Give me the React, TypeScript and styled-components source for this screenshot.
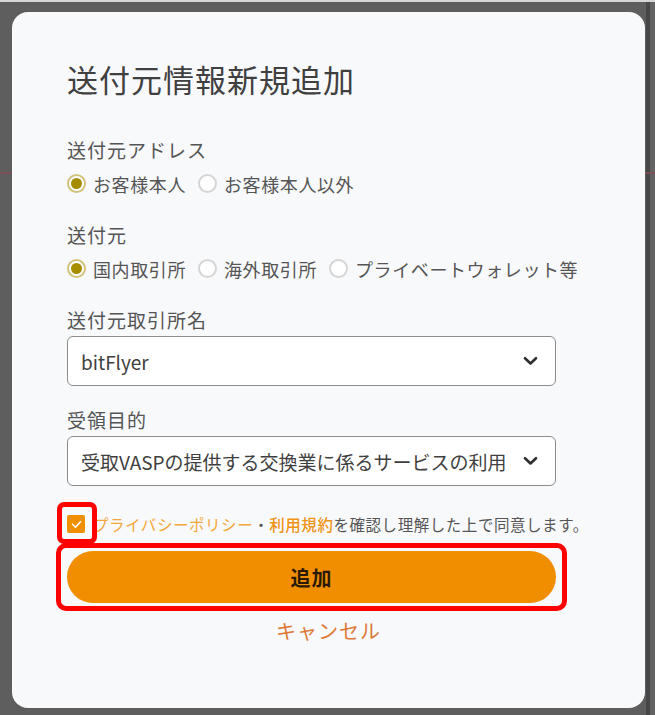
import React, { useState } from 'react';
import styled, { createGlobalStyle } from 'styled-components';

const Global = createGlobalStyle`
  html, body { margin: 0; padding: 0; }
  body {
    font-family: "Noto Sans CJK JP", "Noto Sans", sans-serif;
    background: #5e5e5e;
  }
  *, *::before, *::after { box-sizing: border-box; }
`;

const Backdrop = styled.div`
  width: 655px;
  height: 715px;
  overflow: hidden;
  border-top: 2px solid #d6d6d6;
  padding: 10px 10px 7px 12px;
  background:
    linear-gradient(#7c4f57, #7c4f57) 0 170px / 100% 2px no-repeat,
    linear-gradient(to right, #5e5e5e 0 646px, #474747 646px 650px, #626262 650px);
`;

const Modal = styled.div`
  width: 633px;
  height: 696px;
  border-radius: 16px;
  background: #f8f9fb;
  padding-top: 46px;
  display: flex;
  flex-direction: column;
`;

const Content = styled.div`
  margin-left: 55px;
  width: 489px;
  display: flex;
  flex-direction: column;
`;

const Title = styled.h1`
  margin: 0 0 36px;
  font-size: 31px;
  line-height: 42px;
  font-weight: 400;
  color: #404040;
  letter-spacing: 1px;
  white-space: nowrap;
`;

const Fields = styled.div`
  display: flex;
  flex-direction: column;
  gap: 20px;
`;

const Field = styled.div`
  display: flex;
  flex-direction: column;
  gap: 2px;
`;

const Label = styled.div`
  font-size: 19px;
  line-height: 28px;
  letter-spacing: 1px;
  color: #555;
`;

const RadioRow = styled.div`
  height: 35px;
  display: flex;
  align-items: center;
  gap: 12px;
`;

const RadioOption = styled.label`
  flex: none;
  white-space: nowrap;
  display: flex;
  align-items: center;
  gap: 7px;
  font-size: 18px;
  letter-spacing: 0.6px;
  color: #555;
  cursor: pointer;
`;

const RadioDot = styled.span<{ $checked: boolean }>`
  width: 19px;
  height: 19px;
  border-radius: 50%;
  background: #fff;
  border: 2px solid ${(p) => (p.$checked ? '#d3c27c' : '#d5d5d5')};
  display: flex;
  align-items: center;
  justify-content: center;
  flex: none;
  &::after {
    content: '';
    width: 11px;
    height: 11px;
    border-radius: 50%;
    background: ${(p) => (p.$checked ? '#a58c00' : 'transparent')};
  }
`;

const SelectBox = styled.div`
  height: 50px;
  border: 1.5px solid #8c8c8c;
  border-radius: 6px;
  background: #fff;
  padding: 0 17px 0 13px;
  display: flex;
  align-items: center;
  justify-content: space-between;
  font-size: 19px;
  color: #3f3f3f;
  cursor: pointer;
`;

const Agreement = styled.div`
  margin-top: 26px;
  height: 24px;
  display: flex;
  align-items: center;
  gap: 8px;
`;

const Anchor = styled.span`
  position: relative;
  display: flex;
  flex: none;
`;

const CheckBox = styled.span`
  width: 18px;
  height: 18px;
  border-radius: 2px;
  background: #f09000;
  display: flex;
  align-items: center;
  justify-content: center;
`;

const Highlight = styled.span<{ $t: number; $r: number; $b: number; $l: number; $radius: number }>`
  position: absolute;
  top: ${(p) => p.$t}px;
  right: ${(p) => p.$r}px;
  bottom: ${(p) => p.$b}px;
  left: ${(p) => p.$l}px;
  border: 5px solid #ff0000;
  border-radius: ${(p) => p.$radius}px;
  pointer-events: none;
`;

const AgreeText = styled.span`
  font-size: 15.5px;
  letter-spacing: 0.55px;
  color: #555;
  white-space: nowrap;
`;

const Link = styled.span<{ $strong?: boolean }>`
  color: ${(p) => (p.$strong ? '#ef9314' : '#f4a63a')};
  font-weight: ${(p) => (p.$strong ? 500 : 400)};
`;

const ButtonWrap = styled.div`
  position: relative;
  margin-top: 15px;
  display: flex;
`;

const PrimaryButton = styled.button`
  flex: 1;
  height: 52px;
  border: none;
  border-radius: 26px;
  background: #f08e00;
  color: #2a1a05;
  font-family: inherit;
  font-size: 20px;
  font-weight: 700;
  letter-spacing: 1px;
  cursor: pointer;
`;

const CancelButton = styled.button`
  margin-top: 14px;
  align-self: center;
  border: none;
  background: none;
  padding: 0;
  font-family: inherit;
  font-size: 20px;
  line-height: 28px;
  letter-spacing: 1px;
  color: #dd7736;
  cursor: pointer;
`;

const Chevron = () => (
  <svg width="15" height="10" viewBox="0 0 15 10" aria-hidden>
    <path d="M2 2.2l5.5 5.3 5.5-5.3" fill="none" stroke="#2f2f2f" strokeWidth="2.6" strokeLinecap="round" strokeLinejoin="round" />
  </svg>
);

const Check = () => (
  <svg width="11" height="9" viewBox="0 0 11 9" aria-hidden>
    <path d="M1.5 4.3l3 3 5-5.6" fill="none" stroke="#fff" strokeWidth="1.6" strokeLinecap="round" strokeLinejoin="round" />
  </svg>
);

type RadioGroupProps = { options: string[]; value: number; onChange: (i: number) => void };

const RadioGroup = ({ options, value, onChange }: RadioGroupProps) => (
  <RadioRow>
    {options.map((o, i) => (
      <RadioOption key={o} onClick={() => onChange(i)}>
        <RadioDot $checked={value === i} />
        {o}
      </RadioOption>
    ))}
  </RadioRow>
);

export default function App() {
  const [who, setWho] = useState(0);
  const [src, setSrc] = useState(0);
  return (
    <>
      <Global />
      <Backdrop>
        <Modal>
          <Content>
            <Title>送付元情報新規追加</Title>
            <Fields>
              <Field>
                <Label>送付元アドレス</Label>
                <RadioGroup options={['お客様本人', 'お客様本人以外']} value={who} onChange={setWho} />
              </Field>
              <Field>
                <Label>送付元</Label>
                <RadioGroup
                  options={['国内取引所', '海外取引所', 'プライベートウォレット等']}
                  value={src}
                  onChange={setSrc}
                />
              </Field>
              <Field>
                <Label>送付元取引所名</Label>
                <SelectBox>
                  <span>bitFlyer</span>
                  <Chevron />
                </SelectBox>
              </Field>
              <Field>
                <Label>受領目的</Label>
                <SelectBox>
                  <span>受取VASPの提供する交換業に係るサービスの利用</span>
                  <Chevron />
                </SelectBox>
              </Field>
            </Fields>
            <Agreement>
              <Anchor>
                <CheckBox>
                  <Check />
                </CheckBox>
                <Highlight $t={-13} $r={-12} $b={-11} $l={-10} $radius={7} />
              </Anchor>
              <AgreeText>
                <Link>プライバシーポリシー</Link>・<Link $strong>利用規約</Link>を確認し理解した上で同意します。
              </AgreeText>
            </Agreement>
            <ButtonWrap>
              <PrimaryButton>追加</PrimaryButton>
              <Highlight $t={-8} $r={-11} $b={-8} $l={-11} $radius={10} />
            </ButtonWrap>
          </Content>
          <CancelButton>キャンセル</CancelButton>
        </Modal>
      </Backdrop>
    </>
  );
}
